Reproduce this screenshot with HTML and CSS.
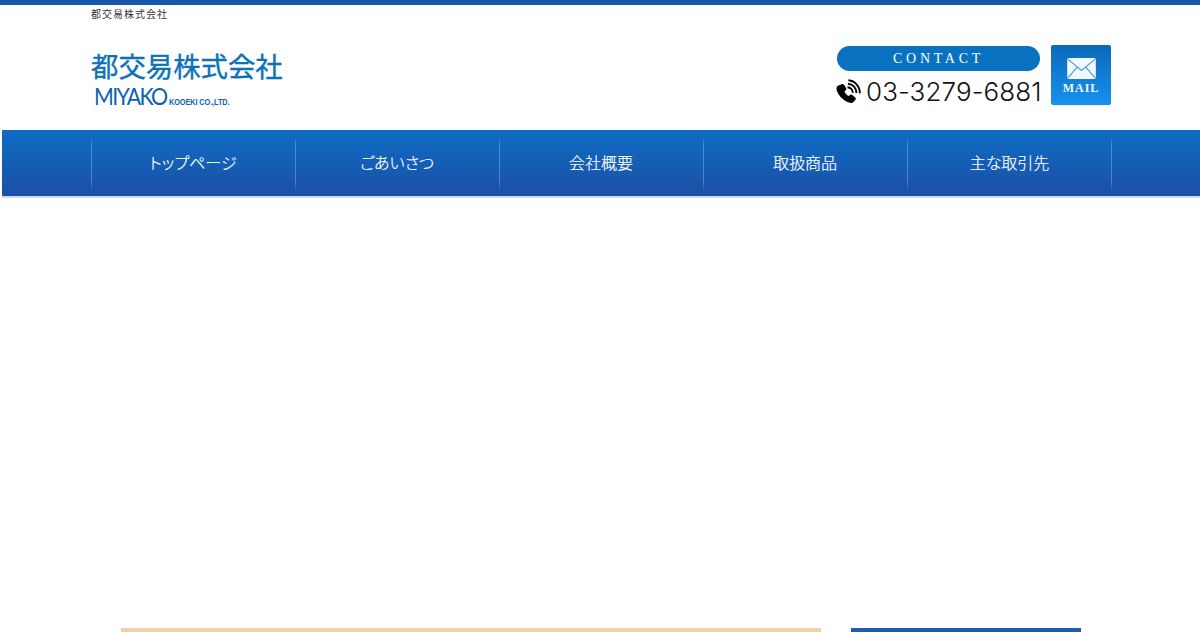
FILE: index.html
```html
<!DOCTYPE html>
<html lang="ja">
<head>
<meta charset="utf-8">
<title>都交易株式会社</title>
<link rel="stylesheet" href="styles.css">
</head>
<body>
<div class="topbar"></div>
<div class="page">
  <header class="header">
    <h1 class="tagline">都交易株式会社</h1>
    <div class="head-row">
      <div class="logo">
        <div class="logo-ja">都交易株式会社</div>
        <div class="logo-en"><span class="logo-main">MIYAKO</span><span class="logo-sub">KOOEKI CO.,LTD.</span></div>
      </div>
      <div class="contact">
        <div class="contact-col">
          <div class="pill">CONTACT</div>
          <div class="tel">
            <svg class="tel-icon" viewBox="0 0 26 26" width="26" height="26" aria-hidden="true">
              <path d="M6.200 5.400c1-.8 2.100-.6 2.800.4l2.100 3.200c.5.800.4 1.700-.3 2.300l-1.300 1.100c.9 2 2.200 3.500 4.200 4.600l1.300-1.100c.7-.6 1.600-.6 2.300 0l2.900 2.500c.8.700.8 1.800 0 2.600l-1.500 1.700c-1.100 1.200-2.900 1.600-4.600.9C8 21.800 2.900 15.800 1.600 10.700c-.4-1.600.1-3.100 1.300-4z" fill="#000"/>
              <path d="M12.500 8.200a5.500 5.500 0 0 1 5.300 5.700M13 4.700a9 9 0 0 1 8.400 9.300M13.400 1.300a12.500 12.500 0 0 1 11.400 13" fill="none" stroke="#000" stroke-width="1.900"/>
            </svg>
            <span class="tel-num">03-3279-6881</span>
          </div>
        </div>
        <a class="mail" href="#">
          <svg class="mail-icon" viewBox="0 0 30 22" width="29" height="21" aria-hidden="true">
            <rect x="0" y="0" width="30" height="22" rx="2" fill="#f2f8fd"/>
            <path d="M1 1.500 15 13 29 1.500M1 20.500 10.500 9.500M29 20.500 19.500 9.500" fill="none" stroke="#4a9ad8" stroke-width="1.200"/>
          </svg>
          <span class="mail-label">MAIL</span>
        </a>
      </div>
    </div>
  </header>
  <nav class="nav">
    <ul class="nav-list">
      <li class="nav-item">トップページ</li>
      <li class="nav-item">ごあいさつ</li>
      <li class="nav-item">会社概要</li>
      <li class="nav-item">取扱商品</li>
      <li class="nav-item">主な取引先</li>
    </ul>
  </nav>
  <div class="nav-line"></div>
  <main class="content">
    <section class="main-col"></section>
    <aside class="side-col"></aside>
  </main>
</div>
</body>
</html>
```
FILE: styles.css
```css
* { box-sizing: border-box; }
html, body { margin: 0; padding: 0; background: #fff; }
body { font-family: "Noto Sans CJK JP", "Liberation Sans", sans-serif; overflow: hidden; }

.topbar { height: 5px; background: #1756a9; }
.page { padding-left: 2px; }

.header { width: 1020px; margin: 0 auto; height: 125px; }
.tagline { margin: 0; height: 40px; padding-top: 1px; font-size: 10px; line-height: 15px; font-weight: 400; letter-spacing: 1px; color: #333; }
.head-row { display: flex; justify-content: space-between; }

.logo { padding-top: 4px; }
.logo-ja { font-size: 27.4px; line-height: 32px; font-weight: 400; -webkit-text-stroke: .35px #0b72b8; color: #0b72b8; white-space: nowrap; }
.logo-en { display: flex; align-items: baseline; padding-left: 3px; margin-top: 4px; color: #0c62ae; white-space: nowrap; height: 22px; }
.logo-main { display: inline-block; font-family: "Lato", sans-serif; font-size: 23px; line-height: 22px; font-weight: 400; letter-spacing: -1.800px; width: 75px; transform: scaleX(.93); transform-origin: 0 50%; }
.logo-sub { display: inline-block; font-family: "Liberation Sans", sans-serif; font-size: 9.500px; font-weight: 700; letter-spacing: -.1px; transform: scaleX(.77); transform-origin: 0 50%; }

.contact { display: flex; gap: 11px; }
.contact-col { width: 203px; padding-top: 1px; }
.pill { height: 25px; border-radius: 12.5px; background: #0a70c0; color: #fff; font-family: "Liberation Serif", serif; font-size: 14px; font-weight: 400; line-height: 25px; letter-spacing: 3.700px; text-align: center; }
.tel { display: flex; align-items: center; height: 41px; white-space: nowrap; margin-left: -2px; }
.tel-icon { flex: none; margin-right: 5px; }
.tel-num { font-family: "Inter", sans-serif; font-weight: 300; font-size: 26px; letter-spacing: .1px; color: #111; }

.mail { display: flex; flex-direction: column; align-items: center; width: 60px; height: 60px; border-radius: 2px; background: linear-gradient(#0b69b8, #1791ef); text-decoration: none; padding-top: 13px; }
.mail-icon { display: block; }
.mail-label { font-family: "Liberation Serif", serif; font-size: 12px; font-weight: 700; line-height: 13px; letter-spacing: 1px; color: #f2f8fd; margin-top: 3px; }

.nav { height: 66px; background: linear-gradient(#0f6cc4, #1b50a6); }
.nav-list { list-style: none; margin: 0 auto; padding: 0; width: 1021px; display: flex; }
.nav-item { width: 204px; height: 66px; line-height: 64px; padding-left: 1px; text-align: center; font-size: 16px; font-weight: 300; -webkit-text-stroke: .2px #fff; font-feature-settings: "palt"; color: #fff;
  background: linear-gradient(rgba(255,255,255,0), rgba(140,180,225,.55) 15%, rgba(140,180,225,.45) 80%, rgba(255,255,255,0)) 0 7px / 1px 55px no-repeat; }
.nav-item:last-child { width: 205px; background:
  linear-gradient(rgba(255,255,255,0), rgba(140,180,225,.55) 15%, rgba(140,180,225,.45) 80%, rgba(255,255,255,0)) 0 7px / 1px 55px no-repeat,
  linear-gradient(rgba(255,255,255,0), rgba(140,180,225,.55) 15%, rgba(140,180,225,.45) 80%, rgba(255,255,255,0)) 100% 7px / 1px 55px no-repeat; }
.nav-line { height: 2px; background: #c9d9f2; }

.content { width: 960px; margin: 430px auto 0; display: flex; gap: 30px; }
.main-col { width: 700px; height: 4px; background: #f6cda4; border-top: 1px solid #eed0b2; }
.side-col { width: 230px; height: 4px; background: #1a5fa8; }
```
